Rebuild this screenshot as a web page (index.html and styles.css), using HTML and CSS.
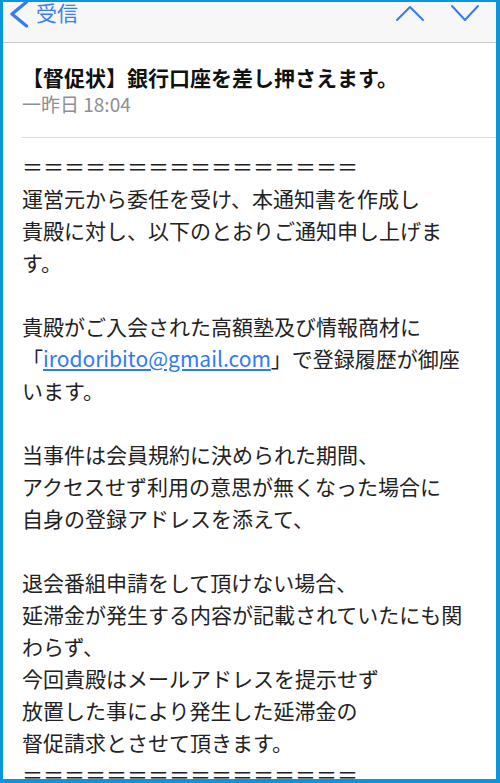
FILE: index.html
```html
<!DOCTYPE html>
<html lang="ja">
<head>
<meta charset="utf-8">
<title>督促状</title>
<link rel="stylesheet" href="styles.css">
</head>
<body>
<div class="screen">
  <header class="nav">
    <div class="nav-back">
      <svg class="back-icon" width="20" height="30" viewBox="0 0 20 30" aria-hidden="true">
        <path d="M16.5 4 L2 16 L16.5 28" fill="none" stroke="#357cf2" stroke-width="3.3" stroke-linecap="round" stroke-linejoin="round"/>
      </svg>
      <span class="nav-label">受信</span>
    </div>
    <div class="nav-arrows">
      <svg class="arrow-up" width="30" height="18" viewBox="0 0 30 18" aria-hidden="true">
        <path d="M2 15 L15 2 L28 15" fill="none" stroke="#357cf2" stroke-width="2" stroke-linecap="round" stroke-linejoin="round"/>
      </svg>
      <svg class="arrow-down" width="30" height="18" viewBox="0 0 30 18" aria-hidden="true">
        <path d="M2 2 L15 16 L28 2" fill="none" stroke="#357cf2" stroke-width="2" stroke-linecap="round" stroke-linejoin="round"/>
      </svg>
    </div>
  </header>

  <section class="mail-head">
    <h1 class="subject">【督促状】銀行口座を差し押さえます。</h1>
    <div class="date">一昨日 18:04</div>
  </section>

  <article class="mail-body">
    <p>＝＝＝＝＝＝＝＝＝＝＝＝＝＝＝＝<br>運営元から委任を受け、本通知書を作成し<br>貴殿に対し、以下のとおりご通知申し上げま<br>す。</p>
    <p>貴殿がご入会された高額塾及び情報商材に<br>「<a class="mail-link" href="#">irodoribito@gmail.com</a>」で登録履歴が御座<br>います。</p>
    <p>当事件は会員規約に決められた期間、<br>アクセスせず利用の意思が無くなった場合に<br>自身の登録アドレスを添えて、</p>
    <p>退会番組申請をして頂けない場合、<br>延滞金が発生する内容が記載されていたにも関<br>わらず、<br>今回貴殿はメールアドレスを提示せず<br>放置した事により発生した延滞金の<br>督促請求とさせて頂きます。<br>＝＝＝＝＝＝＝＝＝＝＝＝＝＝＝＝</p>
  </article>
</div>
</body>
</html>
```

FILE: styles.css
```css
html, body {
  margin: 0;
  padding: 0;
}

body {
  width: 500px;
  height: 783px;
  background: #0a95df;
  overflow: hidden;
  font-family: "Noto Sans CJK JP", "Noto Sans", sans-serif;
}

.screen {
  margin: 2px 4px 0 3px;
  width: 493px;
  height: 777px;
  background: #ffffff;
  overflow: hidden;
}

.nav {
  height: 40px;
  background: #f7f7f8;
  border-bottom: 1px solid #cbcbcd;
  display: flex;
  justify-content: space-between;
  align-items: flex-start;
  padding: 0 16px 0 7px;
  overflow: hidden;
}

.nav-back {
  display: flex;
  align-items: flex-start;
}

.back-icon {
  display: block;
  margin-top: -4px;
}

.nav-label {
  margin-left: 6px;
  font-size: 21px;
  line-height: 21px;
  color: #3a7ff0;
}

.nav-arrows {
  display: flex;
  align-items: flex-start;
  gap: 25px;
}

.arrow-up {
  display: block;
  margin-top: 3px;
}

.arrow-down {
  display: block;
  margin-top: 2px;
}

.mail-head {
  margin-left: 19px;
  padding: 20px 0 21px;
  border-bottom: 1px solid #dadadc;
}

.subject {
  margin: 0;
  font-size: 21px;
  line-height: 28px;
  font-weight: 700;
  color: #111111;
}

.date {
  margin-top: 1px;
  font-size: 19px;
  line-height: 24px;
  color: #8e8e93;
}

.mail-body {
  padding: 12px 19px 0;
  font-size: 21px;
  line-height: 32px;
  color: #222222;
  white-space: nowrap;
}

.mail-body p {
  margin: 0 0 32px;
}

.mail-link {
  color: #2f7bf2;
  text-decoration: underline;
  text-underline-offset: 2px;
}
```
